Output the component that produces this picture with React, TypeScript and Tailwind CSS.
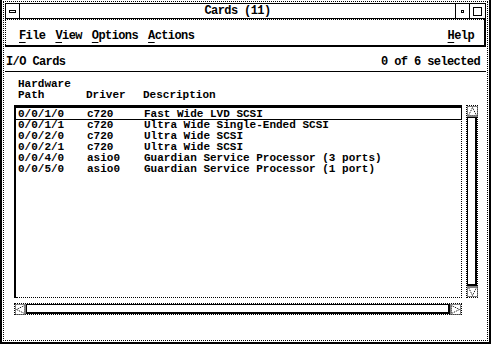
const rows = [
  ['0/0/1/0', 'c720', 'Fast Wide LVD SCSI'],
  ['0/0/1/1', 'c720', 'Ultra Wide Single-Ended SCSI'],
  ['0/0/2/0', 'c720', 'Ultra Wide SCSI'],
  ['0/0/2/1', 'c720', 'Ultra Wide SCSI'],
  ['0/0/4/0', 'asio0', 'Guardian Service Processor (3 ports)'],
  ['0/0/5/0', 'asio0', 'Guardian Service Processor (1 port)'],
];

const arrowPoints = {
  up: '5.5,1.5 9.5,9.5 1.5,9.5',
  down: '1.5,1.5 9.5,1.5 5.5,9.5',
  left: '1.5,5.5 9.5,1.5 9.5,9.5',
  right: '1.5,1.5 9.5,5.5 1.5,9.5',
};

// dithered (insensitive) scroll arrow
function Arrow({ dir }: { dir: 'up' | 'down' | 'left' | 'right' }) {
  return (
    <svg width="11" height="11" viewBox="0 0 11 11" className="block shrink-0">
      <rect x="0.5" y="0.5" width="10" height="10" fill="white" stroke="#000" strokeDasharray="1 1" />
      <polygon points={arrowPoints[dir]} fill="none" stroke="#000" strokeDasharray="1 1" />
    </svg>
  );
}

function Mn({ c, rest }: { c: string; rest: string }) {
  return (
    <span>
      <span className="underline underline-offset-[3px] decoration-1">{c}</span>
      {rest}
    </span>
  );
}

export default function App() {
  return (
    <div className="w-[491px] h-[345px] bg-white overflow-hidden font-['Liberation_Mono',monospace] text-[12px] tracking-[-0.6px] leading-[11px] font-bold text-black">
      <div className="w-[491px] h-[344px] border-x-2 border-b-2 border-black p-px">
        <div className="h-full border border-dotted border-black p-px flex flex-col">
          {/* title bar */}
          <div className="h-[16px] flex border border-black shrink-0">
            <div className="w-[14px] border-r border-black flex items-center justify-center">
              <div className="w-[7px] h-[3px] border border-black" />
            </div>
            <div className="flex-1 flex items-center justify-center pt-px">Cards (11)</div>
            <div className="w-[14px] border-l border-black flex items-center justify-center">
              <div className="w-[3px] h-[3px] border border-black" />
            </div>
            <div className="w-[16px] border-l border-black flex items-center justify-center">
              <div className="w-[9px] h-[9px] border border-black" />
            </div>
          </div>

          {/* menu bar */}
          <div className="h-[28px] border-b-2 border-r-2 border-black shrink-0">
            <div className="h-full border-t border-l border-dotted border-black flex items-center pl-[13px] pr-[10px] pt-[7px] gap-[10px]">
              <Mn c="F" rest="ile" />
              <Mn c="V" rest="iew" />
              <Mn c="O" rest="ptions" />
              <Mn c="A" rest="ctions" />
              <div className="flex-1" />
              <Mn c="H" rest="elp" />
            </div>
          </div>

          {/* work area */}
          <div className="flex-1 flex flex-col">
            <div className="h-[25px] flex items-center justify-between pl-px pr-[6px] pt-[6px] border-b border-black shrink-0">
              <span>I/O Cards</span>
              <span>0 of 6 selected</span>
            </div>

            <div className="flex pl-[13px] pt-[7px] h-[33px] shrink-0 text-[11px] tracking-normal">
              <div className="w-[68px]">
                Hardware
                <br />
                Path
              </div>
              <div className="w-[57px] pt-[11px]">Driver</div>
              <div className="pt-[11px]">Description</div>
            </div>

            <div className="flex pl-[9px] gap-[4px] h-[193px] shrink-0">
              <div className="w-[448px] border-t-2 border-l-2 border-black">
                <div className="h-full border-r border-b border-dotted border-black pt-[1px] text-[11px] tracking-normal">
                  {rows.map((r, i) => (
                    <div
                      key={r[0]}
                      className={
                        'flex h-[11px] pl-[2px] pt-px ' +
                        (i === 0 ? 'shadow-[0_0_0_1px_#000] relative' : '')
                      }
                    >
                      <span className="w-[69px]">{r[0]}</span>
                      <span className="w-[57px]">{r[1]}</span>
                      <span>{r[2]}</span>
                    </div>
                  ))}
                </div>
              </div>

              <div className="w-[12px] border border-dotted border-black flex flex-col">
                <Arrow dir="up" />
                <div className="flex-1 border border-black border-b-2 border-r-2" />
                <Arrow dir="down" />
              </div>
            </div>

            <div className="pl-[9px] pt-[5px]">
              <div className="w-[448px] h-[12px] border border-dotted border-black flex">
                <Arrow dir="left" />
                <div className="flex-1 border border-black border-b-2 border-r-2" />
                <Arrow dir="right" />
              </div>
            </div>
          </div>
        </div>
      </div>
    </div>
  );
}
